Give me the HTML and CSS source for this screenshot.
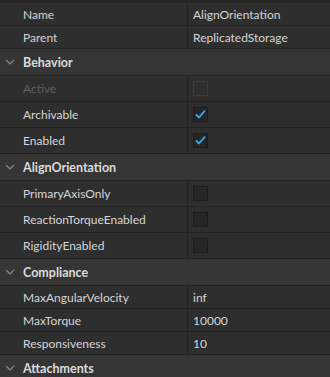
FILE: index.html
```html
<!DOCTYPE html>
<html lang="en">
<head>
    <meta charset="UTF-8">
    <title>Properties</title>
    <link rel="stylesheet" href="styles.css">
</head>
<body>
<div id="props">
    <div class="row"><div class="label">Name</div><div class="value">AlignOrientation</div></div>
    <div class="row"><div class="label">Parent</div><div class="value">ReplicatedStorage</div></div>

    <div class="group">
        <svg class="chevron" width="10" height="6" viewBox="0 0 10 6"><path d="M1 1 L5 5 L9 1" /></svg>
        <span>Behavior</span>
    </div>
    <div class="row tall"><div class="label disabled">Active</div><div class="value"><span class="check off"></span></div></div>
    <div class="row tall"><div class="label">Archivable</div><div class="value"><span class="check"><svg width="13" height="13" viewBox="0 0 13 13"><path d="M2 6.5 L5 9.5 L11 2.5" /></svg></span></div></div>
    <div class="row tall"><div class="label">Enabled</div><div class="value"><span class="check"><svg width="13" height="13" viewBox="0 0 13 13"><path d="M2 6.5 L5 9.5 L11 2.5" /></svg></span></div></div>

    <div class="group">
        <svg class="chevron" width="10" height="6" viewBox="0 0 10 6"><path d="M1 1 L5 5 L9 1" /></svg>
        <span>AlignOrientation</span>
    </div>
    <div class="row tall"><div class="label">PrimaryAxisOnly</div><div class="value"><span class="check"></span></div></div>
    <div class="row tall"><div class="label">ReactionTorqueEnabled</div><div class="value"><span class="check"></span></div></div>
    <div class="row tall"><div class="label">RigidityEnabled</div><div class="value"><span class="check"></span></div></div>

    <div class="group">
        <svg class="chevron" width="10" height="6" viewBox="0 0 10 6"><path d="M1 1 L5 5 L9 1" /></svg>
        <span>Compliance</span>
    </div>
    <div class="row"><div class="label">MaxAngularVelocity</div><div class="value">inf</div></div>
    <div class="row"><div class="label">MaxTorque</div><div class="value">10000</div></div>
    <div class="row"><div class="label">Responsiveness</div><div class="value">10</div></div>

    <div class="group">
        <svg class="chevron" width="10" height="6" viewBox="0 0 10 6"><path d="M1 1 L5 5 L9 1" /></svg>
        <span>Attachments</span>
    </div>
</div>
</body>
</html>
```

FILE: styles.css
```css
body {
    margin: 0;
    background-color: #2e2e2e;
    font-family: Lato, "Liberation Sans", sans-serif;
    font-size: 12px;
    color: #d4d6d8;
}
#props {
    width: 330px;
    border-top: 3px solid #252525;
}
.row {
    display: grid;
    grid-template-columns: 188px 1fr;
    height: 22px;
    border-bottom: 1px solid #222222;
    background-color: #2e2e2e;
}
.row.tall {
    height: 25px;
}
.label {
    padding-left: 23px;
    display: flex;
    align-items: center;
    border-right: 1px solid #222222;
}
.label.disabled {
    color: #5f5f5f;
}
.value {
    padding-left: 5px;
    display: flex;
    align-items: center;
}
.group {
    display: flex;
    align-items: center;
    height: 26px;
    background-color: #353535;
    border-bottom: 1px solid #222222;
    font-weight: bold;
    font-size: 12.5px;
    color: #dcdcdc;
}
.chevron {
    margin: 0 8px 0 5px;
}
.chevron path {
    fill: none;
    stroke: #8a8a8a;
    stroke-width: 1.2;
}
.check {
    width: 13px;
    height: 13px;
    border: 1px solid #1b1b1b;
    background-color: #262626;
    display: flex;
    align-items: center;
    justify-content: center;
}
.check.off {
    border-color: #3c3c3c;
    background-color: #2e2e2e;
}
.check path {
    fill: none;
    stroke: #3aa9ec;
    stroke-width: 1.8;
}
```
